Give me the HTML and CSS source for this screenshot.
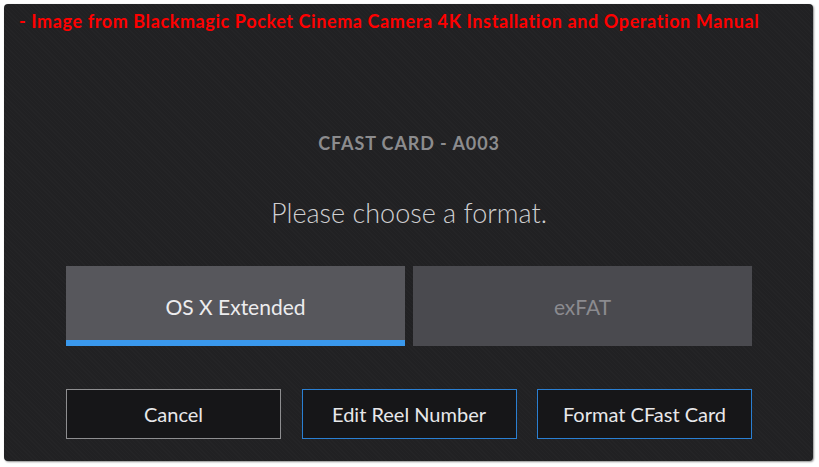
FILE: index.html
```html
<!DOCTYPE html>
<html>
<head>
<meta charset="utf-8">
<link rel="stylesheet" href="styles.css">
</head>
<body>
<div class="panel">
  <div class="note">- Image from Blackmagic Pocket Cinema Camera 4K Installation and Operation Manual</div>
  <div class="content">
    <div class="heading">CFAST CARD - A003</div>
    <div class="prompt">Please choose a format.</div>
    <div class="formats">
      <div class="format selected">OS X Extended</div>
      <div class="format">exFAT</div>
    </div>
    <div class="actions">
      <div class="action cancel">Cancel</div>
      <div class="action">Edit Reel Number</div>
      <div class="action">Format CFast Card</div>
    </div>
  </div>
</div>
</body>
</html>
```

FILE: styles.css
```css
html, body {
  margin: 0;
  padding: 0;
  background: #ffffff;
}
body {
  width: 819px;
  height: 467px;
  padding: 4px 0 0 4px;
  box-sizing: border-box;
  font-family: Lato, "Open Sans", sans-serif;
}
.panel {
  width: 809px;
  height: 457px;
  box-sizing: border-box;
  background-color: #212123;
  background-image: repeating-linear-gradient(45deg, rgba(255,255,255,0.015) 0 1px, transparent 1px 3px);
  border-radius: 4px;
  box-shadow: 1px 1px 2px rgba(0,0,0,0.45);
  padding: 7px 0 22px 0;
}
.note {
  padding-left: 15px;
  font-family: Lato, sans-serif;
  font-weight: bold;
  font-size: 18px;
  line-height: 20px;
  letter-spacing: 0.6px;
  color: #ff0000;
}
.content {
  padding: 0 61px 0 62px;
  display: flex;
  flex-direction: column;
  align-items: stretch;
}
.heading {
  margin-top: 102px;
  text-align: center;
  font-weight: bold;
  font-size: 18px;
  line-height: 20px;
  color: #8c8c8e;
  letter-spacing: 0.9px;
}
.prompt {
  margin-top: 45px;
  text-align: center;
  font-weight: 300;
  font-size: 27px;
  line-height: 30px;
  color: #cfcfd1;
}
.formats {
  margin-top: 38px;
  display: flex;
  gap: 8px;
}
.format {
  flex: 1;
  height: 80px;
  display: flex;
  align-items: center;
  justify-content: center;
  background: #4a4a4f;
  color: #8b8b8f;
  font-size: 21px;
}
.format.selected {
  background: #57575c;
  color: #ececee;
  box-shadow: inset 0 -6px 0 #3a98ec;
}
.actions {
  margin-top: 43px;
  display: flex;
  justify-content: space-between;
}
.action {
  width: 215px;
  height: 50px;
  box-sizing: border-box;
  border: 1.5px solid #2a7fd2;
  background: #161618;
  color: #e8e8ea;
  font-size: 20px;
  display: flex;
  align-items: center;
  justify-content: center;
}
.action.cancel {
  border-color: #8e8e90;
}
```
